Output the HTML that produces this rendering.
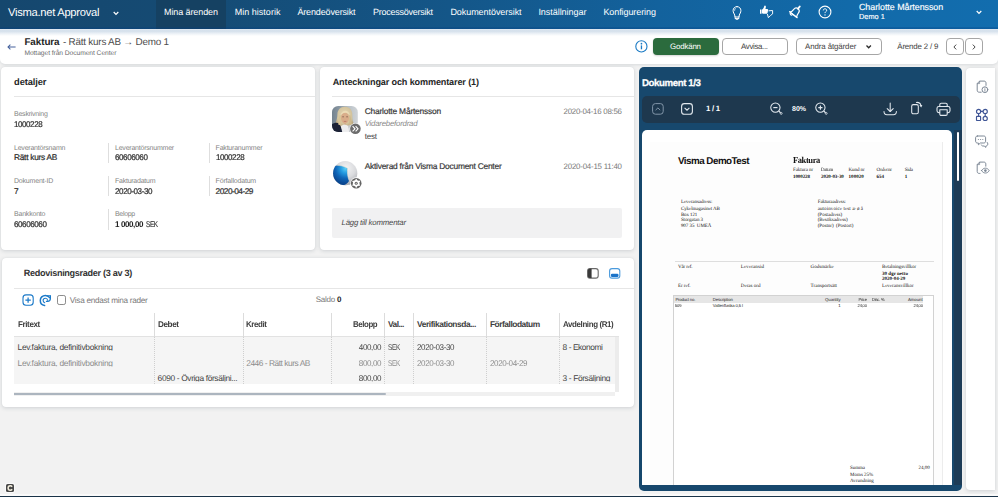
<!DOCTYPE html>
<html><head><meta charset="utf-8">
<style>
*{box-sizing:border-box;margin:0;padding:0}
html,body{width:998px;height:497px;overflow:hidden;background:#f2f2f2;font-family:"Liberation Sans",sans-serif;color:#252626;text-rendering:geometricPrecision;}
.abs{position:absolute}
.x{position:absolute;white-space:pre}
svg{position:absolute;overflow:visible}
#nav{left:0;top:0;width:998px;height:28.6px;background:linear-gradient(90deg,#15476e 0%,#154b74 20%,#145688 45%,#13629d 66%,#126aa9 85%,#126dae 100%)}
#navsh{left:0;top:28.6px;width:998px;height:7px;background:linear-gradient(180deg,rgba(70,120,170,.16) 0%,rgba(70,120,170,.24) 28%,rgba(70,120,170,.12) 60%,rgba(70,120,170,0) 100%)}
#hdr{left:0;top:27px;width:998px;height:36.6px;background:#fff;border-radius:0 0 5px 5px;box-shadow:0 1px 3px rgba(40,60,80,.13)}
.card{position:absolute;background:#fff;border-radius:4px;box-shadow:0 1px 4px rgba(40,60,80,.17),0 0 1px rgba(40,60,80,.10)}
.hr{position:absolute;height:1px;background:#e6e6e6}
.vr{position:absolute;width:1px;background:#dedede}
.btn{position:absolute;border-radius:4px}
.dv{position:absolute;width:0;border-left:1px dotted #cfcfcf}
.dvs{position:absolute;width:1px;background:#dcdcdc}
</style></head><body>

<!-- NAV -->
<div id="hdr" class="abs"></div>
<div id="nav" class="abs"><div class="abs" style="left:155.6px;top:0;width:70.8px;height:28.6px;background:#15405f;opacity:.85"></div><div class="abs" style="left:0;top:26.7px;width:998px;height:1.9px;background:linear-gradient(180deg,rgba(0,60,130,.22),rgba(0,60,130,.34))"></div></div>
<div id="navsh" class="abs"></div>
<svg style="left:113px;top:11px" width="6" height="5" viewBox="0 0 6 5"><path d="M0.7 1 L3 3.4 L5.3 1" fill="none" stroke="#fff" stroke-width="1.2"/></svg>
<svg style="left:975.5px;top:10.4px" width="6" height="5" viewBox="0 0 6 5"><path d="M0.7 1 L3 3.4 L5.3 1" fill="none" stroke="#fff" stroke-width="1.2"/></svg>

<!-- bulb -->
<svg style="left:731px;top:5px" width="12" height="16" viewBox="0 0 12 16"><g fill="none" stroke="#fff" stroke-width="1" stroke-linecap="round" stroke-linejoin="round"><path d="M6 1.6 C3.5 1.6 2.1 3.5 2.1 5.6 C2.1 7.6 3.2 8.6 3.7 10 C3.9 10.6 4 11.3 4 12 H8 C8 11.3 8.1 10.6 8.3 10 C8.8 8.6 9.9 7.6 9.9 5.6 C9.9 3.5 8.5 1.6 6 1.6 Z"/><path d="M4.2 13.6 H7.8"/><path d="M4 12 C4 13.6 4.7 14.4 6 14.4 C7.3 14.4 8 13.6 8 12"/><path d="M4.3 3.6 C3.8 4.1 3.6 4.7 3.6 5.3" stroke-width=".8"/></g></svg>
<!-- thumbs -->
<svg style="left:759px;top:5px" width="16" height="14" viewBox="0 0 16 14"><path d="M1 4.4 H2.5 V8.8 H1 Z M3 4.6 C4.2 4 4.9 2.6 5.2 1.2 C5.35 0.6 5.7 0.45 6.1 0.5 C6.7 0.6 7 1.2 6.9 2 C6.8 2.8 6.6 3.4 6.4 3.9 H8.2 C8.8 3.9 9.2 4.4 9.1 5 L8.6 7.8 C8.5 8.4 8.1 8.7 7.5 8.7 H4.2 C3.7 8.7 3.3 8.5 3 8.3 Z" fill="#fff"/>
<path d="M9.9 5.8 L13.6 5.5 V8.9 L11.6 10.4 L9.4 12.7 L8.5 9.4" fill="none" stroke="#fff" stroke-width=".95" stroke-linejoin="round" stroke-linecap="round"/></svg>
<!-- bell -->
<svg style="left:788px;top:5px" width="15" height="14" viewBox="0 0 15 14"><g transform="translate(7.2 7.3) rotate(38)" fill="none" stroke="#fff" stroke-width="1.15" stroke-linecap="round" stroke-linejoin="round"><path d="M0 -7.4 V-4.6" stroke-width="1.9"/><path d="M-4.2 3 C-3.2 1.5 -3 -0.5 -3 -1.5 C-3 -3.5 -1.7 -4.6 0 -4.6 C1.7 -4.6 3 -3.5 3 -1.5 C3 -0.5 3.2 1.5 4.2 3 Z"/><path d="M-4.9 3 H4.9"/><path d="M-3.4 3.2 C-3.4 5.2 -0.6 5.2 -0.6 3.2"/></g></svg>
<!-- help -->
<svg style="left:817.6px;top:5px" width="14" height="14" viewBox="0 0 14 14"><circle cx="7" cy="7" r="5.9" fill="none" stroke="#fff" stroke-width="1.1"/><path d="M5.3 5.4 C5.3 4.4 6 3.8 7 3.8 C8 3.8 8.7 4.4 8.7 5.3 C8.7 6.6 7 6.6 7 8.1" fill="none" stroke="#fff" stroke-width="1"/><circle cx="7" cy="9.9" r=".7" fill="#fff"/></svg>


<!-- HEADER -->
<svg style="left:7.4px;top:43.6px" width="9" height="6" viewBox="0 0 9 6"><path d="M8.6 3 H1.2 M3.4 0.6 L1 3 L3.4 5.4" fill="none" stroke="#44609c" stroke-width="1.05"/></svg>
<svg style="left:635px;top:39.6px" width="13" height="13" viewBox="0 0 13 13"><circle cx="6.4" cy="6.4" r="5.6" fill="#fff" stroke="#1a7ac4" stroke-width="1.1"/><rect x="5.8" y="5.4" width="1.3" height="3.9" fill="#1a7ac4"/><circle cx="6.45" cy="3.7" r="0.85" fill="#1a7ac4"/></svg>
<div class="btn" style="left:652.6px;top:38px;width:66.4px;height:16.6px;background:#2b6b3d;box-shadow:0 1px 2px rgba(0,0,0,.18)"></div>
<div class="btn" style="left:722px;top:38px;width:66.4px;height:16.6px;background:#fff;border:1px solid #a6a6a6"></div>
<div class="btn" style="left:796.2px;top:38px;width:85.6px;height:16.6px;background:#fff;border:1px solid #a6a6a6"></div>
<svg style="left:866px;top:44.6px" width="5.4" height="3.6" viewBox="0 0 5.4 3.6"><path d="M0.5 0.5 L2.7 2.8 L4.9 0.5" fill="none" stroke="#2a2a2a" stroke-width="1.3"/></svg>
<div class="btn" style="left:946.3px;top:38px;width:17.4px;height:16.6px;background:#fff;border:1px solid #a6a6a6"></div>
<div class="btn" style="left:964.8px;top:38px;width:18px;height:16.6px;background:#fff;border:1px solid #a6a6a6"></div>
<svg style="left:953px;top:43.6px" width="4" height="6" viewBox="0 0 4 6"><path d="M3.2 0.6 L0.9 3 L3.2 5.4" fill="none" stroke="#333" stroke-width="0.9"/></svg>
<svg style="left:972px;top:43.6px" width="4" height="6" viewBox="0 0 4 6"><path d="M0.8 0.6 L3.1 3 L0.8 5.4" fill="none" stroke="#333" stroke-width="0.9"/></svg>

<!-- DETALJER -->
<div class="card" style="left:1px;top:67px;width:314px;height:182.6px"></div>
<div class="hr" style="left:14px;top:95.7px;width:301px"></div>
<div class="vr" style="left:108.4px;top:142.5px;height:20.5px"></div>
<div class="vr" style="left:209px;top:142.5px;height:20.5px"></div>
<div class="vr" style="left:108.4px;top:175.7px;height:20.5px"></div>
<div class="vr" style="left:209px;top:175.7px;height:20.5px"></div>
<div class="vr" style="left:108.4px;top:209px;height:20.5px"></div>

<!-- ANTECKNINGAR -->
<div class="card" style="left:320px;top:67px;width:314.2px;height:182.6px"></div>
<div class="hr" style="left:332px;top:95.7px;width:302px"></div>
<div class="abs" style="left:332.2px;top:208.4px;width:289.8px;height:29.6px;background:#f1f1f2;border-radius:2px"></div>

<svg style="left:332.4px;top:105.8px" width="26" height="26" viewBox="0 0 26 26">
<defs><clipPath id="avc"><rect x="0" y="0" width="25.8" height="26" rx="6.2"/></clipPath>
<linearGradient id="avbg" x1="0" x2="1" y1="0" y2="0"><stop offset="0" stop-color="#74838f"/><stop offset=".3" stop-color="#8a98a3"/><stop offset=".62" stop-color="#b9c1c7"/><stop offset="1" stop-color="#d0d4d7"/></linearGradient>
<radialGradient id="hair" cx=".5" cy=".4" r=".6"><stop offset="0" stop-color="#e6d9b8"/><stop offset=".7" stop-color="#d3c39c"/><stop offset="1" stop-color="#b7a47c"/></radialGradient>
<filter id="bl" x="-20%" y="-20%" width="140%" height="140%"><feGaussianBlur stdDeviation=".55"/></filter></defs>
<g clip-path="url(#avc)"><rect width="26" height="26" fill="url(#avbg)"/>
<g filter="url(#bl)">
<path d="M13.2 0.8 C8.6 0.6 5.6 3.8 5.4 8.2 C5.3 11.6 4.6 14.6 3.4 17.4 C4.6 19.6 6.6 21 8.8 21.8 L17.6 21.8 C19.6 20.6 21 18.8 21.4 16.6 C20.2 13.8 20.4 11.4 20.3 8.4 C20.2 4.2 17.8 1 13.2 0.8 Z" fill="url(#hair)"/>
<path d="M0 18.2 C2.6 16.2 5.4 16.2 7.4 17.8 L11.4 26 H0 Z" fill="#1a2136"/>
<path d="M8.8 20 L12.6 18.2 L16.6 20 L17.6 26 H10.2 Z" fill="#ededee"/>
<path d="M16.2 19.4 C18.2 18.6 20 19 21 20.2 L21 26 H17.2 Z" fill="#c4c8cc"/>
<ellipse cx="13" cy="12" rx="4.1" ry="5.6" fill="#d9ad8a"/>
<path d="M8.4 9.6 C9 6.2 11.4 4.8 13.4 4.8 C15.6 4.8 17.6 6.4 17.8 9.8 C16.8 7.6 15.2 6.6 13.2 6.8 C11.2 7 9.6 7.8 8.4 9.6 Z" fill="#ecdcb6"/>
<path d="M7.6 9 C6.6 12 7 15.4 6.2 18.4 L8.8 19.6 C9.2 16.4 8.4 12.6 8.9 9.4 Z" fill="#d8c496"/>
<path d="M18.2 9 C19.2 12 18.8 15.2 19.8 18 L17.4 19.6 C17 16.4 17.8 12.8 17.2 9.6 Z" fill="#cdb98c"/>
<path d="M10.2 10.8 H12 M14.2 10.8 H16" stroke="#7a5a48" stroke-width=".7"/>
<path d="M11.8 15.4 H14.4" stroke="#b0695c" stroke-width=".7"/>
<path d="M12.2 17.6 L13 19.2 L13.9 17.6 Z" fill="#c99a7c"/>
</g></g>
<circle cx="23.4" cy="22.8" r="5.9" fill="#fff"/><circle cx="23.4" cy="22.8" r="5.3" fill="#6c6c6c"/>
<path d="M20.6 20.2 L23 22.8 L20.6 25.4 M23.6 20.2 L26 22.8 L23.6 25.4" fill="none" stroke="#fff" stroke-width="1.1"/>
</svg>
<svg style="left:332.6px;top:161px" width="26" height="26" viewBox="0 0 26 26">
<defs><radialGradient id="sg" cx=".55" cy=".3" r=".75"><stop offset="0" stop-color="#f3f3f4"/><stop offset=".5" stop-color="#dadbde"/><stop offset="1" stop-color="#9fa2a8"/></radialGradient>
<radialGradient id="sb" gradientUnits="userSpaceOnUse" cx="12.5" cy="7.5" r="15"><stop offset="0" stop-color="#5ccdf5"/><stop offset=".3" stop-color="#259de2"/><stop offset=".65" stop-color="#0f66b8"/><stop offset="1" stop-color="#0a4791"/></radialGradient>
<clipPath id="sc"><circle cx="12.2" cy="12.2" r="12.1"/></clipPath></defs>
<circle cx="12.2" cy="12.2" r="12.1" fill="url(#sg)"/>
<g clip-path="url(#sc)"><path d="M-1 5 C4 3.6 9.6 4.6 14.6 7.2 C14.2 11.4 14.4 15.6 16.2 19.8 C14 23.4 10 25.6 5 25 L-2 20 Z" fill="url(#sb)"/>
<path d="M-1 5 C4 3.6 9.6 4.6 14.6 7.2 C14.2 11.4 14.4 15.6 16.2 19.8" fill="none" stroke="#f1e4cf" stroke-width=".5"/>
<path d="M2 22 C6 26 14 26 19 22 L19 26 H2 Z" fill="#0a3f7c" opacity=".35"/></g>
<circle cx="23.2" cy="22.2" r="5.9" fill="#fff"/><circle cx="23.2" cy="22.2" r="5.3" fill="#626262"/>
<circle cx="23.2" cy="22.2" r="3.3" fill="#fff"/>
<g stroke="#fff" stroke-width="1.5" stroke-linecap="round"><path d="M23.2 18.5 V25.9 M20 20.35 L26.4 24.05 M20 24.05 L26.4 20.35"/></g>
<circle cx="23.2" cy="22.2" r="1.5" fill="#666"/><circle cx="23.2" cy="22.2" r=".55" fill="#fff"/>
</svg>


<!-- REDOVISNINGSRADER -->
<div class="card" style="left:1.6px;top:257.9px;width:632.6px;height:149.1px"></div>
<div class="hr" style="left:14px;top:287.7px;width:620px"></div>

<svg style="left:21.6px;top:294px" width="12" height="12" viewBox="0 0 12 12"><rect x="1" y="0.9" width="10.2" height="10.4" rx="3" fill="none" stroke="#1b79c8" stroke-width="1.1"/><path d="M6.1 3.4 V8.8 M3.4 6.1 H8.8" stroke="#1b79c8" stroke-width="1.25" fill="none"/></svg>
<svg style="left:39.2px;top:293.6px" width="13" height="13" viewBox="0 0 13 13"><g fill="none" stroke="#1b79c8" stroke-linecap="round"><path d="M10.6 3.6 C9.6 2.1 8.2 1.4 6.4 1.4 C3.5 1.4 1.3 3.7 1.3 6.4 C1.3 9 3.1 11 5.6 11.5" stroke-width="1.5"/><path d="M8.6 6.2 C8.5 5 7.6 4.2 6.4 4.2 C5.1 4.2 4.1 5.2 4.1 6.5 C4.1 7.6 4.8 8.4 5.8 8.7" stroke-width="1.1"/><path d="M11.4 1.8 V4.6 C11.4 6.4 10.3 7.4 8.6 7.4 H7.4" stroke-width="1.2"/><path d="M8.2 1.9 L11.4 1.8" stroke-width="1.1"/></g></svg>
<div class="abs" style="left:56.5px;top:295.2px;width:9.6px;height:9.6px;border:1px solid #8c8c8c;border-radius:2.2px;background:#fff"></div>
<svg style="left:587px;top:268px" width="12" height="11" viewBox="0 0 12 11"><rect x="0.6" y="0.6" width="10.6" height="9.5" rx="2.4" fill="#fff" stroke="#6a6a6a" stroke-width="1.1"/><path d="M2.6 0.8 H4.6 V9.9 H2.6 C1.6 9.9 0.9 9.2 0.9 8.2 V2.5 C0.9 1.5 1.6 0.8 2.6 0.8 Z" fill="#3a3a3a"/></svg>
<svg style="left:608.8px;top:268px" width="12" height="11" viewBox="0 0 12 11"><rect x="0.6" y="0.6" width="10.2" height="9.5" rx="2.4" fill="#fff" stroke="#4a9add" stroke-width="1.1"/><rect x="1.9" y="5.8" width="7.6" height="3.2" rx="1.2" fill="#1a73c9"/></svg>

<!-- table -->
<div class="abs" style="left:14px;top:336.5px;width:600.5px;height:47.2px;background:#f5f5f5;overflow:hidden">
<div class="x" style="left:3.50px;top:6.39px;font-size:8.4px;line-height:8.4px;color:#444;letter-spacing:-0.275px;clip-path:inset(-3px -3px 0.74px -3px);">Lev.faktura, definitivbokning</div>
<div class="x" style="left:343.88px;top:6.39px;font-size:8.4px;line-height:8.4px;color:#444;letter-spacing:-0.420px;transform:scaleX(0.9649);transform-origin:right center;clip-path:inset(-3px -3px 0.74px -3px);">400,00</div>
<div class="x" style="left:374.00px;top:6.39px;font-size:8.4px;line-height:8.4px;color:#444;letter-spacing:-0.420px;transform:scaleX(0.7661);transform-origin:left center;clip-path:inset(-3px -3px 0.74px -3px);">SEK</div>
<div class="x" style="left:403.10px;top:6.39px;font-size:8.4px;line-height:8.4px;color:#444;letter-spacing:-0.420px;transform:scaleX(0.9600);transform-origin:left center;clip-path:inset(-3px -3px 0.74px -3px);">2020-03-30</div>
<div class="x" style="left:548.50px;top:6.39px;font-size:8.4px;line-height:8.4px;color:#444;letter-spacing:-0.429px;clip-path:inset(-3px -3px 0.74px -3px);">8 - Ekonomi</div>
<div class="x" style="left:3.50px;top:22.39px;font-size:8.4px;line-height:8.4px;color:#8c8c8c;letter-spacing:-0.275px;clip-path:inset(-3px -3px 0.74px -3px);">Lev.faktura, definitivbokning</div>
<div class="x" style="left:232.20px;top:22.39px;font-size:8.4px;line-height:8.4px;color:#8c8c8c;letter-spacing:-0.468px;clip-path:inset(-3px -3px 0.74px -3px);">2446 - Rätt kurs AB</div>
<div class="x" style="left:343.88px;top:22.39px;font-size:8.4px;line-height:8.4px;color:#8c8c8c;letter-spacing:-0.420px;transform:scaleX(0.9649);transform-origin:right center;clip-path:inset(-3px -3px 0.74px -3px);">800,00</div>
<div class="x" style="left:374.00px;top:22.39px;font-size:8.4px;line-height:8.4px;color:#8c8c8c;letter-spacing:-0.420px;transform:scaleX(0.7661);transform-origin:left center;clip-path:inset(-3px -3px 0.74px -3px);">SEK</div>
<div class="x" style="left:403.10px;top:22.39px;font-size:8.4px;line-height:8.4px;color:#8c8c8c;letter-spacing:-0.420px;transform:scaleX(0.9600);transform-origin:left center;clip-path:inset(-3px -3px 0.74px -3px);">2020-03-30</div>
<div class="x" style="left:475.90px;top:22.39px;font-size:8.4px;line-height:8.4px;color:#8c8c8c;letter-spacing:-0.420px;transform:scaleX(0.9625);transform-origin:left center;clip-path:inset(-3px -3px 0.74px -3px);">2020-04-29</div>
<div class="x" style="left:143.60px;top:37.34px;font-size:8.4px;line-height:8.4px;color:#444;letter-spacing:-0.357px;clip-path:inset(-3px -3px 0.74px -3px);">6090 - Övriga försäljni...</div>
<div class="x" style="left:343.88px;top:37.34px;font-size:8.4px;line-height:8.4px;color:#444;letter-spacing:-0.420px;transform:scaleX(0.9649);transform-origin:right center;clip-path:inset(-3px -3px 0.74px -3px);">800,00</div>
<div class="x" style="left:548.50px;top:37.34px;font-size:8.4px;line-height:8.4px;color:#444;letter-spacing:-0.363px;clip-path:inset(-3px -3px 0.74px -3px);">3 - Försäljning</div>
</div>
<div class="abs" style="left:14px;top:336px;width:605px;height:1px;background:#e2e2e2"></div>
<div class="abs" style="left:614.5px;top:337px;width:4.6px;height:54.5px;background:#ececec"></div>
<div class="abs" style="left:14px;top:392.1px;width:600.5px;height:4.1px;background:#f0f0f0"></div>
<div class="abs" style="left:14px;top:393.1px;width:371.8px;height:2.3px;background:#acb5bf;border-radius:0 1px 1px 0"></div>
<div class="dvs" style="left:154.0px;top:313.4px;height:23.2px"></div><div class="dv" style="left:154.0px;top:337px;height:47px"></div>
<div class="dvs" style="left:242.5px;top:313.4px;height:23.2px"></div><div class="dv" style="left:242.5px;top:337px;height:47px"></div>
<div class="dvs" style="left:331.0px;top:313.4px;height:23.2px"></div><div class="dv" style="left:331.0px;top:337px;height:47px"></div>
<div class="dvs" style="left:384.0px;top:313.4px;height:23.2px"></div><div class="dv" style="left:384.0px;top:337px;height:47px"></div>
<div class="dvs" style="left:413.0px;top:313.4px;height:23.2px"></div><div class="dv" style="left:413.0px;top:337px;height:47px"></div>
<div class="dvs" style="left:486.0px;top:313.4px;height:23.2px"></div><div class="dv" style="left:486.0px;top:337px;height:47px"></div>
<div class="dvs" style="left:559.2px;top:313.4px;height:23.2px"></div><div class="dv" style="left:559.2px;top:337px;height:47px"></div>


<!-- DOCUMENT PANEL -->
<div class="abs" style="left:638.6px;top:67.2px;width:323px;height:423.4px;background:#17486d;border-radius:5px"></div>
<div class="abs" style="left:641.8px;top:95.8px;width:318.4px;height:26.8px;background:#1e384e;border-radius:5px"></div>
<div class="abs" style="left:954.4px;top:130px;width:7.2px;height:355.4px;background:#1d3c57"></div>
<div class="abs" style="left:956.7px;top:131.6px;width:2.1px;height:49.4px;background:#fff;border-radius:1px"></div>
<div class="abs" id="pdf" style="left:641.8px;top:130.2px;width:310.4px;height:355.1px;background:#fff;border-radius:5px 5px 0 0;overflow:hidden">
<div class="abs" style="left:.2px;top:.3px;width:0;height:0">

<div class="abs" style="left:8.299999999999955px;top:11.300000000000011px;width:293.1px;height:360px;background:#fdfdfd;border-right:1px solid #ececec"></div>
<div class="abs" style="left:32.799999999999955px;top:130.29999999999998px;width:258.80000000000007px;height:.8px;background:#dedede"></div>
<div class="abs" style="left:30.800000000000047px;top:164.79999999999998px;width:261.2px;height:200px;border:0.8px solid #d2d2d2;background:#fff"></div>
<div class="abs" style="left:31.600000000000044px;top:165.6px;width:249.69999999999993px;height:6.6px;background:#e6e6e6"></div>

</div>
<div class="x" style="left:36.20px;top:26.65px;font-size:9.8px;line-height:9.8px;color:#111;letter-spacing:-0.504px;font-weight:bold;">Visma DemoTest</div>
<div class="x" style="left:151.20px;top:25.66px;font-size:9px;line-height:9px;color:#111;letter-spacing:-0.450px;font-weight:bold;font-family:'Liberation Serif',serif;transform:scaleX(0.9479);transform-origin:left center;">Faktura</div>
<div class="x" style="left:151.20px;top:37.66px;font-size:5.0px;line-height:5.0px;color:#111;letter-spacing:-0.056px;font-family:'Liberation Serif',serif;">Faktura nr</div>
<div class="x" style="left:179.20px;top:37.66px;font-size:5.0px;line-height:5.0px;color:#111;letter-spacing:-0.250px;font-family:'Liberation Serif',serif;transform:scaleX(0.9675);transform-origin:left center;">Datum</div>
<div class="x" style="left:206.80px;top:37.66px;font-size:5.0px;line-height:5.0px;color:#111;letter-spacing:-0.089px;font-family:'Liberation Serif',serif;">Kund nr</div>
<div class="x" style="left:234.80px;top:37.66px;font-size:5.0px;line-height:5.0px;color:#111;letter-spacing:-0.071px;font-family:'Liberation Serif',serif;">Ordernr</div>
<div class="x" style="left:262.90px;top:37.66px;font-size:5.0px;line-height:5.0px;color:#111;letter-spacing:-0.197px;font-family:'Liberation Serif',serif;">Sida</div>
<div class="x" style="left:151.20px;top:44.66px;font-size:5.0px;line-height:5.0px;color:#111;letter-spacing:-0.083px;font-weight:bold;font-family:'Liberation Serif',serif;">1000228</div>
<div class="x" style="left:179.20px;top:44.66px;font-size:5.0px;line-height:5.0px;color:#111;letter-spacing:-0.049px;font-weight:bold;font-family:'Liberation Serif',serif;">2020-03-30</div>
<div class="x" style="left:206.80px;top:44.66px;font-size:5.0px;line-height:5.0px;color:#111;letter-spacing:0.020px;font-weight:bold;font-family:'Liberation Serif',serif;">100020</div>
<div class="x" style="left:234.80px;top:44.66px;font-size:5.0px;line-height:5.0px;color:#111;letter-spacing:-0.050px;font-weight:bold;font-family:'Liberation Serif',serif;">654</div>
<div class="x" style="left:262.90px;top:44.66px;font-size:5.0px;line-height:5.0px;color:#111;letter-spacing:0.000px;font-weight:bold;font-family:'Liberation Serif',serif;">1</div>
<div class="x" style="left:39.10px;top:69.81px;font-size:5.0px;line-height:5.0px;color:#111;letter-spacing:-0.051px;font-family:'Liberation Serif',serif;">Leveransadress:</div>
<div class="x" style="left:39.10px;top:76.61px;font-size:5.0px;line-height:5.0px;color:#111;letter-spacing:-0.071px;font-family:'Liberation Serif',serif;">Cykelmagasinet AB</div>
<div class="x" style="left:39.10px;top:82.71px;font-size:5.0px;line-height:5.0px;color:#111;letter-spacing:-0.116px;font-family:'Liberation Serif',serif;">Box 121</div>
<div class="x" style="left:39.10px;top:87.66px;font-size:5.0px;line-height:5.0px;color:#111;letter-spacing:-0.063px;font-family:'Liberation Serif',serif;">Storgatan 3</div>
<div class="x" style="left:39.10px;top:93.66px;font-size:5.0px;line-height:5.0px;color:#111;letter-spacing:-0.035px;font-family:'Liberation Serif',serif;">907 35  UMEÅ</div>
<div class="x" style="left:175.90px;top:69.81px;font-size:5.0px;line-height:5.0px;color:#111;letter-spacing:-0.067px;font-family:'Liberation Serif',serif;">Fakturaadress:</div>
<div class="x" style="left:175.90px;top:76.61px;font-size:5.0px;line-height:5.0px;color:#111;letter-spacing:0.099px;font-family:'Liberation Serif',serif;">autoinvoice test æ ø å</div>
<div class="x" style="left:175.90px;top:82.71px;font-size:5.0px;line-height:5.0px;color:#111;letter-spacing:0.004px;font-family:'Liberation Serif',serif;">(Postadress)</div>
<div class="x" style="left:175.90px;top:87.66px;font-size:5.0px;line-height:5.0px;color:#111;letter-spacing:-0.022px;font-family:'Liberation Serif',serif;">(Besöksadress)</div>
<div class="x" style="left:175.90px;top:93.66px;font-size:5.0px;line-height:5.0px;color:#111;letter-spacing:-0.024px;font-family:'Liberation Serif',serif;">(Postnr)  (Postort)</div>
<div class="x" style="left:36.20px;top:134.76px;font-size:5.0px;line-height:5.0px;color:#111;letter-spacing:-0.150px;font-family:'Liberation Serif',serif;">Vår ref.</div>
<div class="x" style="left:99.00px;top:134.76px;font-size:5.0px;line-height:5.0px;color:#111;letter-spacing:0.109px;font-family:'Liberation Serif',serif;">Leveransid</div>
<div class="x" style="left:168.80px;top:134.76px;font-size:5.0px;line-height:5.0px;color:#111;letter-spacing:0.017px;font-family:'Liberation Serif',serif;">Godsmärke</div>
<div class="x" style="left:240.30px;top:134.76px;font-size:5.0px;line-height:5.0px;color:#111;letter-spacing:-0.040px;font-family:'Liberation Serif',serif;">Betalningsvillkor</div>
<div class="x" style="left:240.30px;top:141.81px;font-size:5.0px;line-height:5.0px;color:#111;letter-spacing:0.005px;font-weight:bold;font-family:'Liberation Serif',serif;">30 dgr netto</div>
<div class="x" style="left:240.30px;top:146.66px;font-size:5.0px;line-height:5.0px;color:#111;letter-spacing:-0.016px;font-weight:bold;font-family:'Liberation Serif',serif;">2020-04-29</div>
<div class="x" style="left:36.20px;top:153.81px;font-size:5.0px;line-height:5.0px;color:#111;letter-spacing:-0.030px;font-family:'Liberation Serif',serif;">Er ref.</div>
<div class="x" style="left:99.00px;top:153.81px;font-size:5.0px;line-height:5.0px;color:#111;letter-spacing:0.003px;font-family:'Liberation Serif',serif;">Deras ord</div>
<div class="x" style="left:168.80px;top:153.81px;font-size:5.0px;line-height:5.0px;color:#111;letter-spacing:0.015px;font-family:'Liberation Serif',serif;">Transportsätt</div>
<div class="x" style="left:240.30px;top:153.81px;font-size:5.0px;line-height:5.0px;color:#111;letter-spacing:-0.004px;font-family:'Liberation Serif',serif;">Leveransvillkor</div>
<div class="x" style="left:33.60px;top:167.61px;font-size:4.3px;line-height:4.3px;color:#222;letter-spacing:-0.198px;">Product no.</div>
<div class="x" style="left:71.00px;top:167.61px;font-size:4.3px;line-height:4.3px;color:#222;letter-spacing:-0.150px;">Description</div>
<div class="x" style="left:183.30px;top:167.61px;font-size:4.3px;line-height:4.3px;color:#222;letter-spacing:-0.074px;">Quantity</div>
<div class="x" style="left:216.56px;top:167.61px;font-size:4.3px;line-height:4.3px;color:#222;letter-spacing:-0.215px;transform:scaleX(0.9399);transform-origin:right center;">Price</div>
<div class="x" style="left:230.70px;top:167.61px;font-size:4.3px;line-height:4.3px;color:#222;letter-spacing:-0.215px;transform:scaleX(0.9633);transform-origin:left center;">Disc. %</div>
<div class="x" style="left:266.10px;top:167.61px;font-size:4.3px;line-height:4.3px;color:#222;letter-spacing:-0.002px;">Amount</div>
<div class="x" style="left:33.60px;top:173.71px;font-size:4.3px;line-height:4.3px;color:#222;letter-spacing:-0.215px;transform:scaleX(0.9493);transform-origin:left center;">509</div>
<div class="x" style="left:71.00px;top:173.71px;font-size:4.3px;line-height:4.3px;color:#222;letter-spacing:-0.144px;">Vattenflaska 0,5 l</div>
<div class="x" style="left:196.41px;top:173.71px;font-size:4.3px;line-height:4.3px;color:#222;letter-spacing:0.000px;">1</div>
<div class="x" style="left:215.59px;top:173.71px;font-size:4.3px;line-height:4.3px;color:#222;letter-spacing:-0.215px;transform:scaleX(0.9389);transform-origin:right center;">24,00</div>
<div class="x" style="left:270.99px;top:173.71px;font-size:4.3px;line-height:4.3px;color:#222;letter-spacing:-0.215px;transform:scaleX(0.9389);transform-origin:right center;">24,00</div>
<div class="x" style="left:208.30px;top:335.81px;font-size:5px;line-height:5px;color:#111;letter-spacing:-0.095px;font-family:'Liberation Serif',serif;">Summa</div>
<div class="x" style="left:276.80px;top:335.81px;font-size:5px;line-height:5px;color:#111;letter-spacing:-0.013px;font-family:'Liberation Serif',serif;">24,00</div>
<div class="x" style="left:208.30px;top:342.81px;font-size:5px;line-height:5px;color:#111;letter-spacing:-0.015px;font-family:'Liberation Serif',serif;">Moms 25%</div>
<div class="x" style="left:208.30px;top:348.66px;font-size:5px;line-height:5px;color:#111;letter-spacing:-0.011px;font-family:'Liberation Serif',serif;">Avrundning</div>
</div>

<svg style="left:652.4px;top:102.8px" width="12" height="12" viewBox="0 0 12 12"><rect x="0.6" y="0.6" width="10.6" height="10.6" rx="2.8" fill="none" stroke="#8296a9" stroke-width="1"/><path d="M3.6 7.1 L5.9 4.9 L8.2 7.1" fill="none" stroke="#8296a9" stroke-width="1"/></svg>
<svg style="left:680.6px;top:102.8px" width="12" height="12" viewBox="0 0 12 12"><rect x="0.6" y="0.6" width="10.8" height="10.6" rx="2.8" fill="none" stroke="#e3e9ef" stroke-width="1.1"/><path d="M3.6 4.9 L6 7.2 L8.4 4.9" fill="none" stroke="#e3e9ef" stroke-width="1.1"/></svg>
<svg style="left:769px;top:101px" width="15" height="15" viewBox="0 0 15 15"><circle cx="6.4" cy="6.6" r="4.65" fill="none" stroke="#e3e9ef" stroke-width="1.05"/><path d="M4.3 6.6 H8.5" stroke="#e3e9ef" stroke-width="1.15"/><path d="M9.8 10 L11.6 11.8" stroke="#e3e9ef" stroke-width="1.2"/><circle cx="12.2" cy="12.4" r=".95" fill="none" stroke="#e3e9ef" stroke-width=".8"/></svg>
<svg style="left:814px;top:101px" width="15" height="15" viewBox="0 0 15 15"><circle cx="6.4" cy="6.6" r="4.65" fill="none" stroke="#e3e9ef" stroke-width="1.05"/><path d="M4.3 6.6 H8.5 M6.4 4.5 V8.7" stroke="#e3e9ef" stroke-width="1.15"/><path d="M9.8 10 L11.6 11.8" stroke="#e3e9ef" stroke-width="1.2"/><circle cx="12.2" cy="12.4" r=".95" fill="none" stroke="#e3e9ef" stroke-width=".8"/></svg>
<svg style="left:883px;top:102px" width="15" height="14" viewBox="0 0 15 14"><g fill="none" stroke="#e3e9ef" stroke-width="1.05" stroke-linecap="round" stroke-linejoin="round"><path d="M7.2 0.9 V9.4"/><path d="M4.2 6.6 L7.2 9.5 L10.2 6.6"/><path d="M1 9.6 C1 11.8 1.9 12.7 4 12.7 H10.4 C12.5 12.7 13.4 11.8 13.4 9.6"/></g></svg>
<svg style="left:910px;top:101px" width="14" height="14" viewBox="0 0 14 14"><g fill="none" stroke="#e3e9ef" stroke-width="1.05" stroke-linejoin="round"><rect x="1.7" y="3.6" width="6.6" height="9.2" rx="1.6"/><path d="M6.4 1.4 C9 1.2 10.6 2.6 10.9 4.6" stroke-linecap="round"/></g><path d="M9.4 4.2 L12.4 3.9 L11.2 6.6 Z" fill="#e3e9ef"/></svg>
<svg style="left:936.4px;top:101.6px" width="15" height="15" viewBox="0 0 15 15"><g fill="none" stroke="#e3e9ef" stroke-width="1.1" stroke-linejoin="round"><path d="M3.8 4.4 V2.6 C3.8 1.7 4.4 1.2 5.2 1.2 H9.8 C10.6 1.2 11.2 1.7 11.2 2.6 V4.4"/><path d="M3.8 10.6 H2.9 C1.7 10.6 1 9.9 1 8.8 V6.3 C1 5.2 1.7 4.5 2.9 4.5 H12.1 C13.3 4.5 14 5.2 14 6.3 V8.8 C14 9.9 13.3 10.6 12.1 10.6 H11.2"/><path d="M3.8 7.8 H11.2 V12 C11.2 12.9 10.6 13.4 9.8 13.4 H5.2 C4.4 13.4 3.8 12.9 3.8 12 Z"/></g></svg>


<!-- RIGHT SIDEBAR -->
<div class="card" style="left:965.6px;top:68px;width:29.5px;height:422.4px;border-radius:4px 0 0 4px"></div>

<svg style="left:976px;top:80.4px" width="13" height="14" viewBox="0 0 13 14"><g fill="none" stroke="#7d8896" stroke-width="1" stroke-linecap="round" stroke-linejoin="round"><path d="M5.2 12.2 H3.2 C1.9 12.2 1.2 11.5 1.2 10.2 V3.6 L3.6 1.1 H8 C9.3 1.1 10 1.8 10 3.1 V5.4"/><path d="M1.4 3.6 H3.6 V1.3" stroke-width=".8"/><circle cx="8.9" cy="9.7" r="2.9"/><path d="M8.9 9.2 V11.2" stroke-width=".9"/></g><circle cx="8.9" cy="8" r=".5" fill="#7d8896"/></svg>
<svg style="left:975px;top:107.6px" width="14" height="14" viewBox="0 0 14 14"><g fill="none" stroke="#3f5596" stroke-width="1.15"><circle cx="3.6" cy="3.4" r="2.1"/><circle cx="10.2" cy="3.4" r="2.1"/><circle cx="10.2" cy="10.4" r="2.1"/><rect x="1.5" y="8.4" width="4.1" height="4.1" rx=".5"/><path d="M5.7 3.4 H8.1 M3.6 5.5 V8.4 M10.2 5.5 V8.3"/></g></svg>
<svg style="left:975.4px;top:134.6px" width="14" height="14" viewBox="0 0 14 14"><g fill="none" stroke="#7d8896" stroke-width="1" stroke-linecap="round" stroke-linejoin="round"><path d="M2.4 1 H8.8 C9.9 1 10.6 1.7 10.6 2.8 V6.2 C10.6 7.3 9.9 8 8.8 8 H5.4 L3.4 9.8 V8 H2.4 C1.3 8 0.6 7.3 0.6 6.2 V2.8 C0.6 1.7 1.3 1 2.4 1 Z"/><path d="M12.2 7.4 C12.6 7.8 12.8 8.3 12.8 9 C12.8 10.2 12 11 10.8 11 V12.4 L9.2 11 H8 C7.2 11 6.6 10.6 6.3 10"/></g><g fill="#7d8896"><circle cx="3.4" cy="4.5" r=".6"/><circle cx="5.6" cy="4.5" r=".6"/><circle cx="7.8" cy="4.5" r=".6"/></g></svg>
<svg style="left:975.6px;top:161.2px" width="15" height="14" viewBox="0 0 15 14"><g fill="none" stroke="#7d8896" stroke-width="1" stroke-linecap="round" stroke-linejoin="round"><path d="M4 12.4 H3.2 C1.9 12.4 1.2 11.7 1.2 10.4 V3.6 L3.6 1.1 H7.8 C9.1 1.1 9.8 1.8 9.8 3.1 V5.2"/><path d="M1.4 3.6 H3.6 V1.3" stroke-width=".8"/><path d="M5.6 9.6 C6.6 7.9 7.9 7.2 9.4 7.2 C10.9 7.2 12.2 7.9 13.2 9.6 C12.2 11.3 10.9 12 9.4 12 C7.9 12 6.6 11.3 5.6 9.6 Z"/></g><circle cx="9.4" cy="9.6" r="1.3" fill="#7d8896"/></svg>


<!-- bottom -->
<div class="abs" style="left:5.4px;top:483px;width:10px;height:10px;background:#fafafa;border-radius:2.5px"></div>
<div class="abs" style="left:6.3px;top:484px;width:8.1px;height:8px;background:#484848;border-radius:1.6px"></div>
<svg style="left:6.3px;top:484px" width="8.1" height="8" viewBox="0 0 8.1 8"><path d="M6.15 2.75 C5.7 2.1 5.1 1.75 4.3 1.75 C3 1.75 2.1 2.7 2.1 4 C2.1 5.3 3 6.25 4.3 6.25 C5.1 6.25 5.7 5.9 6.15 5.25" fill="none" stroke="#f3eedd" stroke-width="1.45"/></svg>
<div class="abs" style="left:0;top:494.4px;width:998px;height:1.2px;background:#fafafa"></div>
<div class="abs" style="left:0;top:495.5px;width:998px;height:1.5px;background:#1a3348"></div>

<div class="x" style="left:8.00px;top:7.87px;font-size:11.2px;line-height:11.2px;color:#ffffff;letter-spacing:-0.282px;">Visma.net Approval</div>
<div class="x" style="left:164.00px;top:7.78px;font-size:9px;line-height:9px;color:#ffffff;letter-spacing:-0.095px;">Mina ärenden</div>
<div class="x" style="left:234.80px;top:7.78px;font-size:9px;line-height:9px;color:#ffffff;letter-spacing:0.008px;">Min historik</div>
<div class="x" style="left:297.40px;top:7.78px;font-size:9px;line-height:9px;color:#ffffff;letter-spacing:-0.141px;">Ärendeöversikt</div>
<div class="x" style="left:373.00px;top:7.78px;font-size:9px;line-height:9px;color:#ffffff;letter-spacing:-0.252px;">Processöversikt</div>
<div class="x" style="left:450.40px;top:7.78px;font-size:9px;line-height:9px;color:#ffffff;letter-spacing:-0.055px;">Dokumentöversikt</div>
<div class="x" style="left:538.40px;top:7.78px;font-size:9px;line-height:9px;color:#ffffff;letter-spacing:-0.044px;">Inställningar</div>
<div class="x" style="left:603.40px;top:7.78px;font-size:9px;line-height:9px;color:#ffffff;letter-spacing:-0.079px;">Konfigurering</div>
<div class="x" style="left:859.00px;top:2.87px;font-size:8.9px;line-height:8.9px;color:#ffffff;letter-spacing:-0.035px;-webkit-text-stroke:0.15px #fff;">Charlotte Mårtensson</div>
<div class="x" style="left:859.00px;top:12.97px;font-size:7.3px;line-height:7.3px;color:#ffffff;letter-spacing:0.048px;-webkit-text-stroke:0.15px #fff;">Demo 1</div>
<div class="x" style="left:24.40px;top:37.87px;font-size:9.9px;line-height:9.9px;color:#252626;letter-spacing:-0.079px;font-weight:bold;">Faktura</div>
<div class="x" style="left:63.00px;top:37.87px;font-size:9.9px;line-height:9.9px;color:#4d4d4d;letter-spacing:-0.221px;">- Rätt kurs AB → Demo 1</div>
<div class="x" style="left:24.40px;top:50.78px;font-size:6.7px;line-height:6.7px;color:#6a6a6a;letter-spacing:-0.060px;">Mottaget från Document Center</div>
<div class="x" style="left:670.00px;top:42.81px;font-size:7.9px;line-height:7.9px;color:#ffffff;letter-spacing:-0.172px;">Godkänn</div>
<div class="x" style="left:741.00px;top:42.81px;font-size:7.9px;line-height:7.9px;color:#444;letter-spacing:-0.336px;">Avvisa...</div>
<div class="x" style="left:805.00px;top:42.81px;font-size:7.9px;line-height:7.9px;color:#444;letter-spacing:-0.103px;">Andra åtgärder</div>
<div class="x" style="left:897.30px;top:42.81px;font-size:7.9px;line-height:7.9px;color:#444;letter-spacing:-0.182px;">Ärende 2 / 9</div>
<div class="x" style="left:14.10px;top:77.88px;font-size:9.3px;line-height:9.3px;color:#252626;letter-spacing:-0.125px;font-weight:bold;">detaljer</div>
<div class="x" style="left:14.00px;top:110.87px;font-size:7px;line-height:7px;color:#858585;letter-spacing:-0.229px;">Beskrivning</div>
<div class="x" style="left:14.00px;top:144.77px;font-size:7px;line-height:7px;color:#858585;letter-spacing:-0.220px;">Leverantörsnamn</div>
<div class="x" style="left:115.00px;top:144.77px;font-size:7px;line-height:7px;color:#858585;letter-spacing:-0.215px;">Leverantörsnummer</div>
<div class="x" style="left:215.60px;top:144.77px;font-size:7px;line-height:7px;color:#858585;letter-spacing:-0.209px;">Fakturanummer</div>
<div class="x" style="left:14.00px;top:177.92px;font-size:7px;line-height:7px;color:#858585;letter-spacing:-0.193px;">Dokument-ID</div>
<div class="x" style="left:115.00px;top:177.92px;font-size:7px;line-height:7px;color:#858585;letter-spacing:-0.244px;">Fakturadatum</div>
<div class="x" style="left:215.60px;top:177.92px;font-size:7px;line-height:7px;color:#858585;letter-spacing:-0.183px;">Förfallodatum</div>
<div class="x" style="left:14.00px;top:210.87px;font-size:7px;line-height:7px;color:#858585;letter-spacing:-0.199px;">Bankkonto</div>
<div class="x" style="left:115.00px;top:210.87px;font-size:7px;line-height:7px;color:#858585;letter-spacing:-0.319px;">Belopp</div>
<div class="x" style="left:14.30px;top:119.87px;font-size:8.3px;line-height:8.3px;color:#2e2e2e;letter-spacing:-0.415px;transform:scaleX(0.9590);transform-origin:left center;-webkit-text-stroke:0.22px #2e2e2e;">1000228</div>
<div class="x" style="left:14.00px;top:152.77px;font-size:8.3px;line-height:8.3px;color:#2e2e2e;letter-spacing:-0.257px;-webkit-text-stroke:0.22px #2e2e2e;">Rätt kurs AB</div>
<div class="x" style="left:115.00px;top:152.77px;font-size:8.3px;line-height:8.3px;color:#2e2e2e;letter-spacing:-0.415px;transform:scaleX(0.9672);transform-origin:left center;-webkit-text-stroke:0.22px #2e2e2e;">60606060</div>
<div class="x" style="left:215.60px;top:152.77px;font-size:8.3px;line-height:8.3px;color:#2e2e2e;letter-spacing:-0.415px;transform:scaleX(0.9590);transform-origin:left center;-webkit-text-stroke:0.22px #2e2e2e;">1000228</div>
<div class="x" style="left:14.00px;top:186.77px;font-size:8.3px;line-height:8.3px;color:#2e2e2e;letter-spacing:0.000px;-webkit-text-stroke:0.22px #2e2e2e;">7</div>
<div class="x" style="left:115.00px;top:186.77px;font-size:8.3px;line-height:8.3px;color:#2e2e2e;letter-spacing:-0.415px;transform:scaleX(0.9685);transform-origin:left center;-webkit-text-stroke:0.22px #2e2e2e;">2020-03-30</div>
<div class="x" style="left:215.60px;top:186.77px;font-size:8.3px;line-height:8.3px;color:#2e2e2e;letter-spacing:-0.517px;-webkit-text-stroke:0.22px #2e2e2e;">2020-04-29</div>
<div class="x" style="left:14.00px;top:219.97px;font-size:8.3px;line-height:8.3px;color:#2e2e2e;letter-spacing:-0.415px;transform:scaleX(0.9672);transform-origin:left center;-webkit-text-stroke:0.22px #2e2e2e;">60606060</div>
<div class="x" style="left:115.00px;top:219.97px;font-size:8.3px;line-height:8.3px;color:#222;letter-spacing:-0.415px;font-weight:bold;transform:scaleX(0.9697);transform-origin:left center;">1 000,00</div>
<div class="x" style="left:146.30px;top:219.97px;font-size:8.3px;line-height:8.3px;color:#2e2e2e;letter-spacing:-0.415px;transform:scaleX(0.7668);transform-origin:left center;-webkit-text-stroke:0.15px #2e2e2e;">SEK</div>
<div class="x" style="left:332.70px;top:77.80px;font-size:9.1px;line-height:9.1px;color:#252626;letter-spacing:-0.139px;font-weight:bold;">Anteckningar och kommentarer (1)</div>
<div class="x" style="left:364.70px;top:106.89px;font-size:8.4px;line-height:8.4px;color:#383838;letter-spacing:-0.188px;-webkit-text-stroke:0.2px #383838;">Charlotte Mårtensson</div>
<div class="x" style="left:364.70px;top:119.80px;font-size:7.8px;line-height:7.8px;color:#8a8a8a;letter-spacing:-0.206px;font-style:italic;">Vidarebefordrad</div>
<div class="x" style="left:364.70px;top:132.98px;font-size:8px;line-height:8px;color:#444;letter-spacing:-0.202px;">test</div>
<div class="x" style="left:563.60px;top:107.76px;font-size:7.9px;line-height:7.9px;color:#777;letter-spacing:-0.261px;">2020-04-16 08:56</div>
<div class="x" style="left:364.70px;top:161.84px;font-size:8.4px;line-height:8.4px;color:#383838;letter-spacing:-0.231px;-webkit-text-stroke:0.2px #383838;">Aktiverad från Visma Document Center</div>
<div class="x" style="left:563.60px;top:162.86px;font-size:7.9px;line-height:7.9px;color:#777;letter-spacing:-0.221px;">2020-04-15 11:40</div>
<div class="x" style="left:341.60px;top:218.85px;font-size:7.8px;line-height:7.8px;color:#4a4a4a;letter-spacing:-0.203px;font-style:italic;">Lägg till kommentar</div>
<div class="x" style="left:23.70px;top:268.85px;font-size:9.1px;line-height:9.1px;color:#333;letter-spacing:-0.310px;font-weight:bold;">Redovisningsrader (3 av 3)</div>
<div class="x" style="left:69.80px;top:296.76px;font-size:8.2px;line-height:8.2px;color:#7a7a7a;letter-spacing:-0.288px;">Visa endast mina rader</div>
<div class="x" style="left:315.70px;top:295.78px;font-size:8px;line-height:8px;color:#7a7a7a;letter-spacing:-0.242px;">Saldo</div>
<div class="x" style="left:337.00px;top:295.78px;font-size:8px;line-height:8px;color:#222;letter-spacing:0.000px;font-weight:bold;">0</div>
<div class="x" style="left:17.50px;top:319.99px;font-size:8.4px;line-height:8.4px;color:#404040;letter-spacing:-0.420px;font-weight:bold;transform:scaleX(0.9658);transform-origin:left center;">Fritext</div>
<div class="x" style="left:157.60px;top:319.99px;font-size:8.4px;line-height:8.4px;color:#404040;letter-spacing:-0.420px;font-weight:bold;transform:scaleX(0.9722);transform-origin:left center;">Debet</div>
<div class="x" style="left:246.20px;top:319.99px;font-size:8.4px;line-height:8.4px;color:#404040;letter-spacing:-0.420px;font-weight:bold;transform:scaleX(0.9501);transform-origin:left center;">Kredit</div>
<div class="x" style="left:352.70px;top:319.99px;font-size:8.4px;line-height:8.4px;color:#404040;letter-spacing:-0.420px;font-weight:bold;transform:scaleX(0.9357);transform-origin:left center;">Belopp</div>
<div class="x" style="left:388.00px;top:319.99px;font-size:8.4px;line-height:8.4px;color:#404040;letter-spacing:-0.539px;font-weight:bold;">Val...</div>
<div class="x" style="left:417.10px;top:319.99px;font-size:8.4px;line-height:8.4px;color:#404040;letter-spacing:-0.433px;font-weight:bold;">Verifikationsda...</div>
<div class="x" style="left:489.90px;top:319.99px;font-size:8.4px;line-height:8.4px;color:#404040;letter-spacing:-0.462px;font-weight:bold;">Förfallodatum</div>
<div class="x" style="left:562.50px;top:319.99px;font-size:8.4px;line-height:8.4px;color:#404040;letter-spacing:-0.420px;font-weight:bold;transform:scaleX(0.9508);transform-origin:left center;">Avdelning (R1)</div>
<div class="x" style="left:642.00px;top:78.94px;font-size:9.7px;line-height:9.7px;color:#ffffff;letter-spacing:-0.412px;font-weight:bold;-webkit-text-stroke:0.25px #fff;">Dokument 1/3</div>
<div class="x" style="left:706.00px;top:104.95px;font-size:7.8px;line-height:7.8px;color:#ffffff;letter-spacing:-0.293px;font-weight:bold;">1 / 1</div>
<div class="x" style="left:792.00px;top:105.77px;font-size:7px;line-height:7px;color:#ffffff;letter-spacing:-0.008px;font-weight:bold;">80%</div>
</body></html>
